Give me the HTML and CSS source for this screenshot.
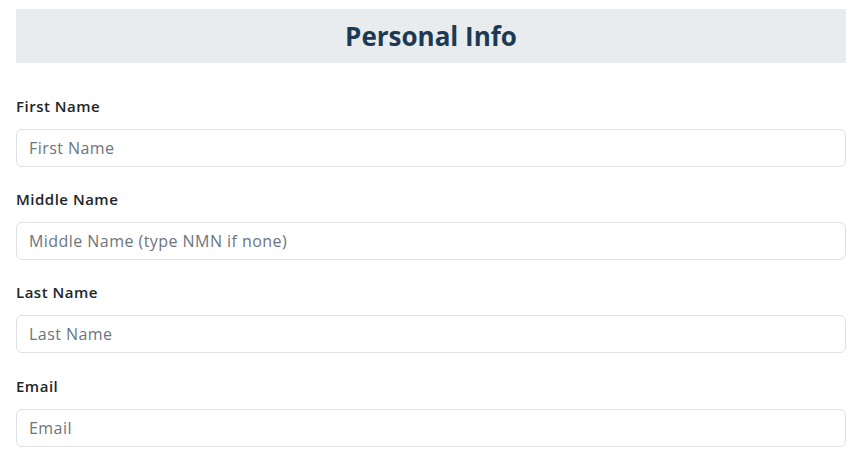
FILE: index.html
```html
<!DOCTYPE html>
<html lang="en">
<head>
    <meta charset="UTF-8">
    <meta name="viewport" content="width=device-width, initial-scale=1.0">
    <title>Personal Info</title>
    <link rel="stylesheet" href="styles.css">
</head>
<body>
    <div class="page">
        <h2 class="section-title">Personal Info</h2>
        <form class="info-form">
            <div class="field">
                <label for="first_name">First Name</label>
                <input type="text" id="first_name" name="first_name" placeholder="First Name">
            </div>
            <div class="field">
                <label for="middle_name">Middle Name</label>
                <input type="text" id="middle_name" name="middle_name" placeholder="Middle Name (type NMN if none)">
            </div>
            <div class="field">
                <label for="last_name">Last Name</label>
                <input type="text" id="last_name" name="last_name" placeholder="Last Name">
            </div>
            <div class="field">
                <label for="email">Email</label>
                <input type="email" id="email" name="email" placeholder="Email">
            </div>
        </form>
    </div>
</body>
</html>
```

FILE: styles.css
```css
body {
    font-family: "Open Sans", Arial, sans-serif;
    margin: 0;
    padding: 0;
    background-color: #fff;
    color: #212529;
}

.page {
    padding: 9px 16px 0 16px;
}

.section-title {
    margin: 0;
    height: 54px;
    background-color: #e9ecef;
    color: #1d3a52;
    font-size: 26px;
    font-weight: 700;
    display: flex;
    align-items: center;
    justify-content: center;
}

.info-form {
    margin-top: 32px;
    display: flex;
    flex-direction: column;
    gap: 21.2px;
}

.field {
    display: flex;
    flex-direction: column;
}

label {
    font-size: 15px;
    font-weight: 600;
    letter-spacing: 0.5px;
    line-height: 22px;
    margin-bottom: 12px;
}

input {
    font-family: inherit;
    font-size: 16px;
    letter-spacing: 0.45px;
    line-height: 24px;
    padding: 6px 12px;
    border: 1px solid #dee2e6;
    border-radius: 6px;
    color: #212529;
}

input::placeholder {
    color: #6c757d;
}
```
